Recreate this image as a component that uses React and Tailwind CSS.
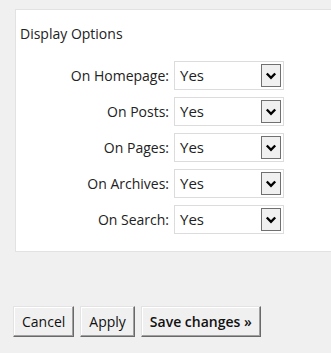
import React from "react";

const rows = ["On Homepage:", "On Posts:", "On Pages:", "On Archives:", "On Search:"];

function Select() {
  return (
    <div className="w-[110px] h-[29px] bg-white border border-[#dcdcdc] flex items-center justify-between pl-[5px] pr-[2px]">
      <span className="text-[15px] text-[#222]">Yes</span>
      <div className="w-[20px] h-[23px] bg-[#f0f0f0] border border-[#707070] flex items-center justify-center">
        <svg width="12" height="8" viewBox="0 0 12 8">
          <path d="M1.8 1.5 L6 5.8 L10.2 1.5" fill="none" stroke="#000" strokeWidth="2.4" />
        </svg>
      </div>
    </div>
  );
}

function Btn({ children, bold }) {
  return (
    <button className={`h-[31px] px-[8px] bg-[#f0f0f0] border border-t-[#e3e3e3] border-l-[#e3e3e3] border-r-[#696969] border-b-[#696969] shadow-[inset_-1px_-1px_#a0a0a0,inset_1px_1px_#fff] text-[14px] text-[#111] ${bold ? "font-semibold" : ""}`}>
      {children}
    </button>
  );
}

export default function App() {
  return (
    <div className="w-[331px] h-[353px] bg-[#f0f0f0] pt-[9px] pl-[15px] font-['Open_Sans',sans-serif] overflow-hidden">
      <div className="h-[243px] bg-white border border-r-0 border-[#e2e2e2] pl-[4px] pt-[13px]">
        <div className="text-[14px] text-[#222]">Display Options</div>
        <div className="mt-[17px] flex flex-col gap-[7px]">
          {rows.map((r) => (
            <div key={r} className="flex items-center">
              <div className="w-[154px] text-right pr-[5px] text-[14px] text-[#222]">{r}</div>
              <Select />
            </div>
          ))}
        </div>
      </div>
      <div className="mt-[54px] -ml-[2px] flex gap-[6px]">
        <Btn>Cancel</Btn>
        <Btn>Apply</Btn>
        <Btn bold>Save changes »</Btn>
      </div>
    </div>
  );
}
